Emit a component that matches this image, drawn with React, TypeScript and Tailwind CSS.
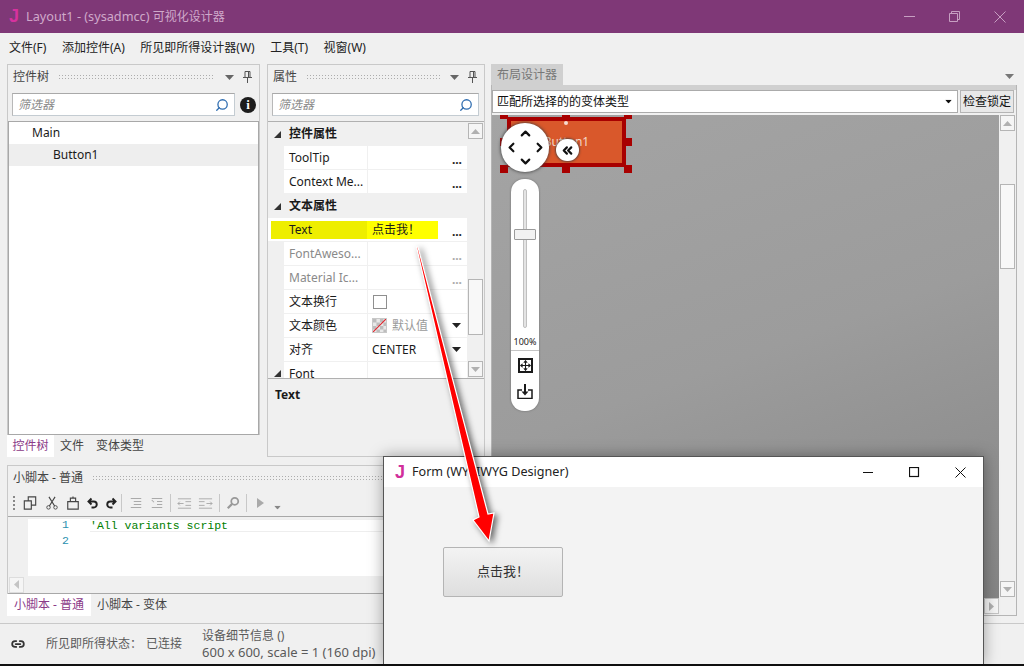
import { ChevronDown, ChevronLeft, ChevronRight, ChevronUp, ChevronsLeft, Link2, Move, Search } from "lucide-react";

const menu = ["文件(F)", "添加控件(A)", "所见即所得设计器(W)", "工具(T)", "视窗(W)"];

const Grip = () => (
  <div className="h-[6px] flex-1 bg-[radial-gradient(circle,#adadad_0.7px,transparent_0.9px)] bg-[length:3px_3px]" />
);

const Triangle = ({ className = "" }: { className?: string }) => (
  <svg width="9" height="5" viewBox="0 0 9 5" className={className}>
    <path d="M0 0h9L4.500 5z" fill="currentColor" />
  </svg>
);

const PinIcon = () => (
  <svg width="9" height="12" viewBox="0 0 9 12" className="text-[#555]">
    <path d="M2 .5h5v6H2zM5.500 1v5.500M0 6.500h9M4.500 7v5" fill="none" stroke="currentColor" />
  </svg>
);

function PanelHeader({ title }: { title: string }) {
  return (
    <div className="flex h-[24px] items-center gap-[9px] pl-[5px] pr-[7px] text-[12px] text-[#444]">
      <span>{title}</span>
      <Grip />
      <Triangle className="ml-[1px] text-[#666]" />
      <PinIcon />
    </div>
  );
}

function FilterBox({ className }: { className: string }) {
  return (
    <div className={`flex h-[23px] items-center justify-between border border-[#c4ccd2] border-t-[#a9a9a9] border-l-[#b8b8b8] bg-white pl-[5px] pr-[5px] ${className}`}>
      <span className="text-[12px] italic text-[#8a8a8a]">筛选器</span>
      <Search size={14} strokeWidth={2.2} className="-scale-x-100 text-[#2f6db0]" />
    </div>
  );
}

function TreePanel() {
  return (
    <div className="flex h-full w-[253px] flex-col">
      <div className="flex flex-1 flex-col border border-[#c9c9c9] border-b-0">
        <PanelHeader title="控件树" />
        <div className="flex items-center gap-[5px] pl-[4px] pt-[4px]">
          <FilterBox className="w-[223px]" />
          <span className="flex h-[16px] w-[16px] items-center justify-center rounded-full bg-[#1d1d1d] font-['Liberation_Serif',serif] text-[13px] font-bold text-white">i</span>
        </div>
        <div className="mt-[5px] flex-1 border border-[#a8a8a8] bg-white text-[12px] text-[#1a1a1a]">
          <div className="flex h-[22px] items-center pl-[23px]">Main</div>
          <div className="flex h-[22px] items-center bg-[#eeeeee] pl-[44px]">Button1</div>
        </div>
      </div>
      <div className="flex h-[22px] items-center text-[12px] text-[#444]">
        <span className="flex h-full w-[47px] items-center justify-center bg-white text-[#8b3a88]">控件树</span>
        <span className="ml-[6px]">文件</span>
        <span className="ml-[12px]">变体类型</span>
      </div>
    </div>
  );
}

function PropSection({ title }: { title: string }) {
  return (
    <div className="flex h-[24px] items-center">
      <svg width="7" height="7" viewBox="0 0 7 7" className="ml-[6px] mr-[8px] text-[#333]">
        <path d="M7 0v7H0z" fill="currentColor" />
      </svg>
      <span className="font-bold text-[#1a1a1a]">{title}</span>
    </div>
  );
}

function PropRow({ name, muted, children }: { name: string; muted?: boolean; children?: React.ReactNode }) {
  return (
    <div className="ml-[16px] flex h-[24px] border-b border-[#f0f0f0] bg-white">
      <div className={`flex w-[84px] items-center whitespace-nowrap border-r border-[#f0f0f0] pl-[5px] ${muted ? "text-[#8a8a8a]" : "text-[#1a1a1a]"}`}>{name}</div>
      <div className="flex flex-1 items-center pl-[4px] pr-[5px]">{children}</div>
    </div>
  );
}

const Dots = ({ muted }: { muted?: boolean }) => (
  <span className={`ml-auto font-bold leading-[10px] pt-[4px] ${muted ? "text-[#aaa]" : "text-[#222]"}`}>...</span>
);

const ScrollBtn = ({ down }: { down?: boolean }) => (
  <div className="flex h-[16px] w-[15px] items-center justify-center border border-[#b5b5b5] bg-[#f5f5f5]">
    <Triangle className={`text-[#b0b0b0] ${down ? "" : "rotate-180"}`} />
  </div>
);

function PropsPanel() {
  return (
    <div className="flex h-full w-[218px] flex-col border border-[#c9c9c9]">
      <PanelHeader title="属性" />
      <div className="px-[4px] pt-[4px]">
        <FilterBox className="w-[207px]" />
      </div>
      <div className="mt-[5px] flex h-[258px] border-y border-[#b0b0b0] text-[12px]">
        <div className="flex-1 overflow-hidden">
          <PropSection title="控件属性" />
          <PropRow name="ToolTip"><Dots /></PropRow>
          <PropRow name="Context Me..."><Dots /></PropRow>
          <PropSection title="文本属性" />
          <div className="flex h-[24px] items-center border-b border-[#f0f0f0] bg-white pl-[3px] pr-[5px]">
            <div className="flex h-[18px] w-[96px] items-center bg-[#eeee00] pl-[18px] text-[#1a1a1a]">Text</div>
            <div className="flex h-[18px] w-[71px] items-center bg-[#ffff00] pl-[5px] text-[#1a1a1a]">点击我！</div>
            <Dots />
          </div>
          <PropRow name="FontAweso..." muted><Dots muted /></PropRow>
          <PropRow name="Material Ic..." muted><Dots muted /></PropRow>
          <PropRow name="文本换行">
            <span className="ml-[1px] h-[14px] w-[14px] border border-[#8f8f8f]" />
          </PropRow>
          <PropRow name="文本颜色">
            <svg width="15" height="15" viewBox="0 0 15 15" className="border border-[#c8c8c8]">
              <rect width="15" height="15" fill="#e8e8e8" />
              <path d="M0 0h4v4H0zM8 0h4v4H8zM4 4h4v4H4zM12 4h3v4h-3zM0 8h4v4H0zM8 8h4v4H8zM4 12h4v3H4zM12 12h3v3h-3z" fill="#bdbdbd" />
              <path d="M0 15L15 0" stroke="#e0222a" strokeWidth="1.300" />
            </svg>
            <span className="ml-[5px] text-[#9a9a9a]">默认值</span>
            <Triangle className="ml-auto mr-[1px] text-[#222]" />
          </PropRow>
          <PropRow name="对齐">
            <span className="text-[#1a1a1a]">CENTER</span>
            <Triangle className="ml-auto mr-[1px] text-[#222]" />
          </PropRow>
          <div className="relative">
            <svg width="7" height="7" viewBox="0 0 7 7" className="absolute left-[6px] top-[8px] text-[#333]">
              <path d="M7 0v7H0z" fill="currentColor" />
            </svg>
            <PropRow name="Font" />
          </div>
        </div>
        <div className="flex w-[17px] flex-col py-[1px] pl-[1px]">
          <ScrollBtn />
          <div className="mt-[140px] h-[56px] w-[15px] border border-[#b5b5b5] bg-[#f8f8f8]" />
          <div className="mt-auto"><ScrollBtn down /></div>
        </div>
      </div>
      <div className="flex-1 pl-[7px] pt-[7px] text-[12px] font-bold text-[#1a1a1a]">Text</div>
    </div>
  );
}

const ToolBtn = ({ children, size, className }: { children: React.ReactNode; size: number; className: string }) => (
  <svg width={size} height={size} viewBox="0 0 16 16" className={className} fill="none" stroke="currentColor">
    {children}
  </svg>
);

const Sep = ({ className }: { className: string }) => <div className={`h-[18px] w-px bg-[#c8c8c8] ${className}`} />;

function ScriptPanel() {
  return (
    <div className="flex h-[151px] flex-col">
      <div className="flex flex-1 flex-col border border-[#c9c9c9] border-b-0">
        <PanelHeader title="小脚本 - 普通" />
        <div className="flex h-[26px] items-center pl-[5px] text-[#444]">
          <div className="h-[14px] w-[2px] border-l-2 border-dotted border-[#888]" />
          <ToolBtn size={14} className="ml-[8px]"><path d="M1.500 5.500h8v9.500h-8zM6 5V1h8.500v9.500H10" strokeWidth="1.300" /></ToolBtn>
          <ToolBtn size={14} className="ml-[8px]"><circle cx="4" cy="13" r="2" /><circle cx="12" cy="13" r="2" /><path d="M5 11.500L11.500 1M11 11.500L4.500 1" strokeWidth="1.300" /></ToolBtn>
          <ToolBtn size={14} className="ml-[7px]"><path d="M2 6.500h12v8.500H2zM5 6.500V2.500h6v4M8 .5v2" strokeWidth="1.300" /></ToolBtn>
          <ToolBtn size={12} className="ml-[7px] text-[#222]"><path d="M6 2L2 6l4 4M2 6h7a3.500 3.500 0 010 8H6" strokeWidth="2.600" /></ToolBtn>
          <ToolBtn size={12} className="ml-[6px] text-[#222]"><path d="M10 2l4 4-4 4M14 6H7a3.500 3.500 0 000 8h3" strokeWidth="2.600" /></ToolBtn>
          <Sep className="ml-[4px]" />
          <ToolBtn size={12} className="ml-[8px]"><path d="M1 2h14M5 6h10M5 10h10M1 14h14" stroke="#aaa" strokeWidth="1.400" /></ToolBtn>
          <ToolBtn size={12} className="ml-[9px]"><path d="M1 2h14M8 6h7M8 10h7M1 14h14M1 4l3 3" stroke="#aaa" strokeWidth="1.400" /></ToolBtn>
          <Sep className="ml-[7px]" />
          <ToolBtn size={15} className="ml-[6px]"><path d="M1 3h14M9 6h6M9 10h6M1 13h14M7 8H1M3 6L1 8l2 2" stroke="#aaa" /></ToolBtn>
          <ToolBtn size={15} className="ml-[6px]"><path d="M1 3h14M1 6h6M1 10h6M1 13h14M9 8h6M13 6l2 2-2 2" stroke="#aaa" /></ToolBtn>
          <Sep className="ml-[6px]" />
          <ToolBtn size={14} className="ml-[6px]"><circle cx="10" cy="6" r="4" stroke="#999" strokeWidth="2" /><path d="M7 9l-5 5" stroke="#999" strokeWidth="2.500" /></ToolBtn>
          <Sep className="ml-[6px]" />
          <svg width="8" height="10" viewBox="0 0 8 10" className="ml-[9px] text-[#aaa]"><path d="M1 0l7 5-7 5z" fill="currentColor" /></svg>
          <Triangle className="ml-[9px] mt-[8px] scale-75 text-[#888]" />
        </div>
        <div className="flex h-[78px] flex-col border-y border-[#a8a8a8]">
          <div className="flex flex-1 bg-[#f0f0f0] pt-[2px]">
            <div className="w-[20px]" />
            <div className="flex-1 bg-white font-['Liberation_Mono',monospace] text-[11.500px]">
              <div className="flex h-[13px] leading-[11px]">
                <span className="w-[62px] pl-[34px] text-[#2b91af]">1</span>
                <span className="flex-1 border-y border-[#eeeeee] text-[#008000]">'All variants script</span>
              </div>
              <div className="flex h-[18px] items-center">
                <span className="w-[62px] pl-[34px] text-[#2b91af]">2</span>
              </div>
            </div>
          </div>
          <div className="flex h-[17px] items-center bg-[#f0f0f0] pl-[1px]">
            <div className="flex h-[16px] w-[15px] items-center justify-center border border-[#dddddd] bg-[#f5f5f5]">
              <Triangle className="rotate-90 text-[#c4c4c4]" />
            </div>
          </div>
        </div>
      </div>
      <div className="flex h-[23px] items-center text-[12px] text-[#444]">
        <span className="flex h-full w-[84px] items-center justify-center bg-white text-[#8b3a88]">小脚本 - 普通</span>
        <span className="ml-[6px]">小脚本 - 变体</span>
      </div>
    </div>
  );
}

function Canvas() {
  const handle = "absolute h-[8px] w-[8px] bg-[#a80000]";
  return (
    <div className="relative flex-1 overflow-hidden bg-[linear-gradient(160deg,#a4a4a4_0%,#9c9c9c_50%,#858585_100%)]">
      {/* selected view on the designer canvas */}
      <div className="absolute left-[15px] top-[2px] flex h-[50px] w-[119px] items-center justify-center border-4 border-[#a80000] bg-[#d9582b] text-[12px] text-[#f4d8c8]">Button1</div>
      <div className={`${handle} -top-[4px] left-[8px]`} />
      <div className={`${handle} -top-[4px] left-[70px]`} />
      <div className={`${handle} -top-[4px] left-[132px]`} />
      <div className={`${handle} left-[8px] top-[23px]`} />
      <div className={`${handle} left-[132px] top-[23px]`} />
      <div className={`${handle} left-[8px] top-[50px]`} />
      <div className={`${handle} left-[70px] top-[50px]`} />
      <div className={`${handle} left-[132px] top-[50px]`} />
      <div className="absolute left-[72px] top-[6px] h-[4px] w-[4px] rounded-full bg-[#f6dcd0]" />

      <div className="absolute left-[9px] top-[8px] grid h-[49px] w-[48px] grid-cols-3 grid-rows-3 place-items-center rounded-full bg-white p-[3px] text-[#111] shadow-[0_0_3px_1px_rgba(60,60,60,0.7)]">
        <span />
        <ChevronUp size={15} strokeWidth={3.5} />
        <span />
        <ChevronLeft size={15} strokeWidth={3.5} />
        <span />
        <ChevronRight size={15} strokeWidth={3.5} />
        <span />
        <ChevronDown size={15} strokeWidth={3.5} />
        <span />
      </div>
      <div className="absolute left-[64px] top-[24px] flex h-[22px] w-[23px] items-center justify-center rounded-full bg-white text-[#111] shadow-[0_0_2px_1px_rgba(60,60,60,0.7)]">
        <ChevronsLeft size={15} strokeWidth={3.5} />
      </div>

      <div className="absolute left-[19px] top-[64px] flex h-[232px] w-[28px] flex-col items-center rounded-[13px] bg-white shadow-[0_0_2px_rgba(60,60,60,0.6)]">
        <div className="relative mt-[10px] h-[139px] w-[4px] rounded-[2px] border border-[#c0c0c0] bg-[#e4e4e4]">
          <div className="absolute -left-[10px] top-[39px] h-[11px] w-[22px] rounded-[1px] border border-[#9a9a9a] bg-[#f2f2f2]" />
        </div>
        <span className="mt-[7px] h-[14px] text-[9px] leading-[14px] text-[#222]">100%</span>
        <div className="mt-[1px] h-px w-full bg-[#c4c4c4]" />
        <div className="mt-[7px] flex h-[15px] w-[15px] items-center justify-center border-2 border-[#1a1a1a]">
          <Move size={11} strokeWidth={2.400} className="text-[#1a1a1a]" />
        </div>
        <svg width="16" height="15" viewBox="0 0 16 15" className="mt-[11px] text-[#1a1a1a]" fill="none" stroke="currentColor">
          <path d="M5 6H1v8.500h14V6h-4" strokeWidth="1.500" />
          <path d="M8 0v9" strokeWidth="2" />
          <path d="M4.500 7.500h7L8 11.500z" fill="currentColor" stroke="none" />
        </svg>
      </div>
    </div>
  );
}

function Designer() {
  return (
    <div className="flex h-full w-[527px] flex-col">
      <div className="flex h-[21px] items-start justify-between pr-[3px]">
        <span className="flex h-full w-[72px] items-center justify-center bg-[#d0d0d0] text-[12px] text-[#777]">布局设计器</span>
        <Triangle className="mt-[10px] text-[#777]" />
      </div>
      <div className="flex flex-1 flex-col border border-t-0 border-[#b5b5b5]">
        <div className="flex gap-[2px] border-t-[5px] border-[#d0d0d0] bg-[#f0f0f0] pb-[2px]">
          <div className="flex h-[23px] flex-1 items-center justify-between border border-[#ababab] bg-white pl-[4px] pr-[4px] text-[12px] text-[#111]">
            <span>匹配所选择的的变体类型</span>
            <Triangle className="scale-75 text-[#111]" />
          </div>
          <div className="mr-[2px] flex h-[23px] w-[54px] items-center justify-center border border-[#b5b5b5] bg-[#e8e8e8] text-[12px] text-[#111]">检查锁定</div>
        </div>
        <div className="flex min-h-0 flex-1">
          <div className="flex flex-1 flex-col">
            <Canvas />
            <div className="flex h-[17px] justify-end bg-[#f0f0f0]">
              <div className="flex h-[16px] w-[15px] items-center justify-center border border-[#c4c4c4] bg-[#f5f5f5]">
                <Triangle className="-rotate-90 text-[#b0b0b0]" />
              </div>
            </div>
          </div>
          <div className="flex w-[17px] flex-col bg-[#f0f0f0] pb-[18px] pl-[1px]">
            <ScrollBtn />
            <div className="mt-[53px] h-[85px] w-[15px] border border-[#b5b5b5] bg-[#f8f8f8]" />
            <div className="mt-auto"><ScrollBtn down /></div>
          </div>
        </div>
      </div>
    </div>
  );
}

function StatusBar() {
  return (
    <div className="flex h-[41px] items-center border-t border-[#c9c9c9] pl-[11px] text-[12px] text-[#5a5a5a]">
      <Link2 size={14} strokeWidth={3} className="text-[#333]" />
      <span className="ml-[21px]">所见即所得状态：</span>
      <span className="ml-[4px]">已连接</span>
      <div className="ml-[20px] flex flex-col leading-[17px]">
        <span>设备细节信息 ()</span>
        <span className="text-[13px]">600 x 600, scale = 1 (160 dpi)</span>
      </div>
    </div>
  );
}

function FormWindow() {
  return (
    <div className="absolute left-[383px] top-[456px] flex h-[208px] w-[601px] flex-col border border-b-0 border-[#555] bg-[#f3f3f3] shadow-[0_0_14px_rgba(0,0,0,0.35)]">
      <div className="flex h-[30px] items-center bg-white pl-[11px] text-[12.600px] text-[#222]">
        <span className="font-['Liberation_Sans',sans-serif] text-[18px] font-bold text-[#d12f9b]">J</span>
        <span className="ml-[7px]">Form (WYSIWYG Designer)</span>
        <svg width="11" height="11" viewBox="0 0 11 11" className="ml-auto mr-[35px]" fill="none" stroke="#111"><path d="M0 5.500h10" /></svg>
        <svg width="11" height="11" viewBox="0 0 11 11" className="mr-[35px]" fill="none" stroke="#111"><rect x=".5" y=".5" width="9" height="9" strokeWidth="1.200" /></svg>
        <svg width="11" height="11" viewBox="0 0 11 11" className="mr-[17px]" fill="none" stroke="#111"><path d="M.5.500l10 10M10.500.500l-10 10" /></svg>
      </div>
      <div className="flex-1 pl-[59px] pt-[60px]">
        <div className="flex h-[50px] w-[120px] items-center justify-center rounded-[2px] border border-[#b4b4b4] bg-[linear-gradient(#f3f3f3,#dedede)] text-[13px] text-[#333]">点击我！</div>
      </div>
    </div>
  );
}

// red callout arrow from the Text row down to the running form's button
function Arrow() {
  return (
    <svg width="1024" height="666" viewBox="0 0 1024 666" className="pointer-events-none absolute left-0 top-0 drop-shadow-[3px_2px_3px_rgba(0,0,0,0.6)]">
      <path d="M416.500 247L418 247 488 514 494 513 489 541 473 520 479 517z" fill="#ff0000" stroke="#ffffff" strokeWidth="1.200" />
    </svg>
  );
}

export default function App() {
  return (
    <div className="relative flex h-[666px] w-[1024px] flex-col overflow-hidden bg-[#f0f0f0] font-['Noto_Sans','Noto_Sans_CJK_SC',sans-serif]">
      <div className="flex h-[33px] items-center bg-[#7f3877] pl-[9px] text-[12.700px] text-[#cfa9ca]">
        <span className="font-['Liberation_Sans',sans-serif] text-[18px] font-bold text-[#d6329e]">J</span>
        <span className="ml-[7px]">Layout1 - (sysadmcc) <span className="text-[12px]">可视化设计器</span></span>
        <svg width="11" height="11" viewBox="0 0 11 11" className="ml-auto mr-[34px]" fill="none" stroke="#c79fc2"><path d="M0 5.500h11" /></svg>
        <svg width="11" height="11" viewBox="0 0 11 11" className="mr-[34px]" fill="none" stroke="#c79fc2"><path d="M.5 2.500h8v8h-8zM2.500 2.500V.5h8v8h-2" /></svg>
        <svg width="12" height="12" viewBox="0 0 12 12" className="mr-[18px]" fill="none" stroke="#c79fc2"><path d="M.5.500l11 11M11.500.500l-11 11" /></svg>
      </div>
      <div className="flex h-[31px] items-center gap-[15.500px] pb-[2px] pl-[9px] text-[12px] text-[#222]">
        {menu.map((m) => (
          <span key={m}>{m}</span>
        ))}
      </div>
      <div className="flex h-[552px] gap-[6px] px-[7px]">
        <div className="flex w-[478px] flex-col gap-[8px]">
          <div className="flex h-[393px] gap-[7px]">
            <TreePanel />
            <PropsPanel />
          </div>
          <ScriptPanel />
        </div>
        <Designer />
      </div>
      <div className="mt-[7px]">
        <StatusBar />
      </div>
      <div className="h-[2px] bg-[#111]" />
      <FormWindow />
      <Arrow />
    </div>
  );
}
